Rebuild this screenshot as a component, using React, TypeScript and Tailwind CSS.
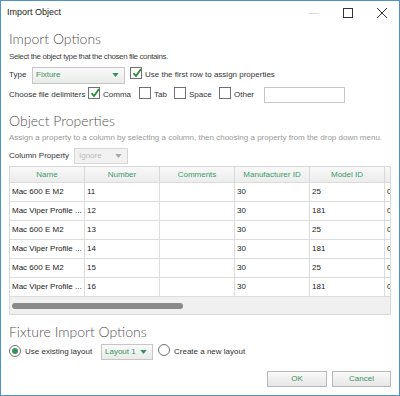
import React from "react";

const rows = [
  ["Mac 600 E M2", "11", "", "30", "25", "0"],
  ["Mac Viper Profile ...", "12", "", "30", "181", "0"],
  ["Mac 600 E M2", "13", "", "30", "25", "0"],
  ["Mac Viper Profile ...", "14", "", "30", "181", "0"],
  ["Mac 600 E M2", "15", "", "30", "25", "0"],
  ["Mac Viper Profile ...", "16", "", "30", "181", "0"],
];

const cols = ["Name", "Number", "Comments", "Manufacturer ID", "Model ID"];

const headingFont = { fontFamily: "Lato, 'Open Sans', sans-serif", fontWeight: 300 };

function Check({ on }: { on?: boolean }) {
  return (
    <span className="relative inline-flex h-[12px] w-[12px] shrink-0 items-center justify-center border border-[#707070] bg-white">
      {on ? (
        <svg viewBox="0 0 12 12" className="absolute -top-[1px] left-0 h-[12px] w-[12px]">
          <path d="M2.5 6.2 L5 9 L10 2" fill="none" stroke="#2f8a3c" strokeWidth="1.8" />
        </svg>
      ) : null}
    </span>
  );
}

function Radio({ on }: { on?: boolean }) {
  return (
    <span className="inline-flex h-[12px] w-[12px] shrink-0 items-center justify-center rounded-full border border-[#707070] bg-white">
      {on ? <span className="h-[6px] w-[6px] rounded-full bg-[#3a9160]" /> : null}
    </span>
  );
}

function Caret({ color = "#3a9160" }: { color?: string }) {
  return (
    <svg viewBox="0 0 8 5" className="h-[4px] w-[7px]">
      <path d="M0 0 H8 L4 5 Z" fill={color} />
    </svg>
  );
}

export default function App() {
  return (
    <div
      className="flex h-[396px] w-[400px] flex-col whitespace-nowrap border border-[#4d94c4] bg-white text-[8px] text-[#333]"
      style={{ fontFamily: "Tahoma, 'Liberation Sans', Arial, sans-serif" }}
    >
      <div className="flex h-[24px] items-center justify-between pl-[6px]">
        <span className="text-[9px] text-[#222]">Import Object</span>
        <div className="flex items-center">
          <span className="flex w-[34px] justify-center">
            <span className="h-px w-[10px] bg-[#ddd]" />
          </span>
          <span className="flex w-[34px] justify-center">
            <span className="h-[10px] w-[10px] border border-[#333]" />
          </span>
          <span className="flex w-[34px] justify-center">
            <svg viewBox="0 0 10 10" className="h-[10px] w-[10px]">
              <path d="M0 0 L10 10 M10 0 L0 10" stroke="#333" strokeWidth="1" />
            </svg>
          </span>
        </div>
      </div>

      <div className="flex flex-1 flex-col px-[8px]">
        <div className="mt-[5px] text-[14px] leading-[18px] text-[#555]" style={headingFont}>
          Import Options
        </div>
        <div className="mt-[3px] leading-[12px] tracking-[-0.4px] text-[#444]">
          Select the object type that the chosen file contains.
        </div>
        <div className="mt-[3px] flex h-[18px] items-center">
          <span className="w-[23px]">Type</span>
          <div className="flex h-[17px] w-[93px] items-center justify-between border border-[#c6c6c6] bg-gradient-to-b from-[#fafafa] to-[#e8ebe8] pl-[3px] pr-[5px] text-[#3a9160]">
            Fixture
            <Caret />
          </div>
          <span className="ml-[5px] mr-[3px]"><Check on /></span>
          <span>Use the first row to assign properties</span>
        </div>
        <div className="mt-[2px] flex h-[17px] items-center">
          <span className="w-[79px]">Choose file delimiters</span>
          <span className="mr-[3px]"><Check on /></span>
          <span className="w-[36px]">Comma</span>
          <span className="mr-[3px]"><Check /></span>
          <span className="w-[20px]">Tab</span>
          <span className="mr-[3px]"><Check /></span>
          <span className="w-[30px]">Space</span>
          <span className="mr-[3px]"><Check /></span>
          <span className="w-[30px]">Other</span>
          <span className="h-[16px] w-[81px] border border-[#c6c6c6] bg-white" />
        </div>

        <div className="mt-[9px] text-[14px] leading-[18px] text-[#555]" style={headingFont}>
          Object Properties
        </div>
        <div className="mt-[2px] leading-[12px] text-[#999]">
          Assign a property to a column by selecting a column, then choosing a property from the drop down menu.
        </div>
        <div className="mt-[3px] flex h-[17px] items-center">
          <span className="w-[65px]">Column Property</span>
          <div className="flex h-[16px] w-[54px] items-center justify-between border border-[#d6d6d6] bg-[#f2f2f2] pl-[4px] pr-[5px] text-[#bbb]">
            Ignore
            <Caret color="#aaa" />
          </div>
        </div>

        <div className="mt-[2px] w-[382px] overflow-hidden border border-[#d8d8d8]">
          <div className="flex h-[15px] bg-gradient-to-b from-[#f8f8f8] to-[#ececec] text-[#3a9a6a]">
            {cols.map((c) => (
              <div key={c} className="flex w-[75px] shrink-0 items-center justify-center border-r border-[#d8d8d8]">
                {c}
              </div>
            ))}
            <div className="flex-1" />
          </div>
          {rows.map((r, i) => (
            <div key={i} className="flex h-[19px] border-t border-[#dcdcdc] text-[#222]">
              {r.map((v, j) => (
                <div
                  key={j}
                  className={
                    j < 5
                      ? "flex w-[75px] shrink-0 items-center overflow-hidden border-r border-[#dcdcdc] pl-[2px]"
                      : "flex flex-1 items-center pl-[2px]"
                  }
                >
                  {v}
                </div>
              ))}
            </div>
          ))}
          <div className="flex h-[18px] items-center border-t border-[#dcdcdc] bg-[#f0f0f0] px-[2px]">
            <div className="h-[6px] w-[171px] rounded-full bg-[#8a8a8a]" />
          </div>
        </div>

        <div className="mt-[8px] text-[14px] leading-[18px] text-[#555]" style={headingFont}>
          Fixture Import Options
        </div>
        <div className="mt-[2px] flex h-[17px] items-center">
          <span className="mr-[4px]"><Radio on /></span>
          <span className="w-[76px]">Use existing layout</span>
          <div className="flex h-[16px] w-[52px] items-center justify-between border border-[#c6c6c6] bg-gradient-to-b from-[#fafafa] to-[#e8ebe8] pl-[3px] pr-[5px] text-[#3a9160]">
            Layout 1
            <Caret />
          </div>
          <span className="ml-[5px] mr-[4px]"><Radio /></span>
          <span>Create a new layout</span>
        </div>
        <div className="mt-[11px] flex justify-end gap-[5px]">
          <button className="h-[16px] w-[60px] border border-[#b8b8b8] bg-gradient-to-b from-[#fafafa] to-[#e6e6e6] text-[8px] text-[#3a9160]">
            OK
          </button>
          <button className="h-[16px] w-[59px] border border-[#b8b8b8] bg-gradient-to-b from-[#fafafa] to-[#e6e6e6] text-[8px] text-[#3a9160]">
            Cancel
          </button>
        </div>
      </div>
    </div>
  );
}
